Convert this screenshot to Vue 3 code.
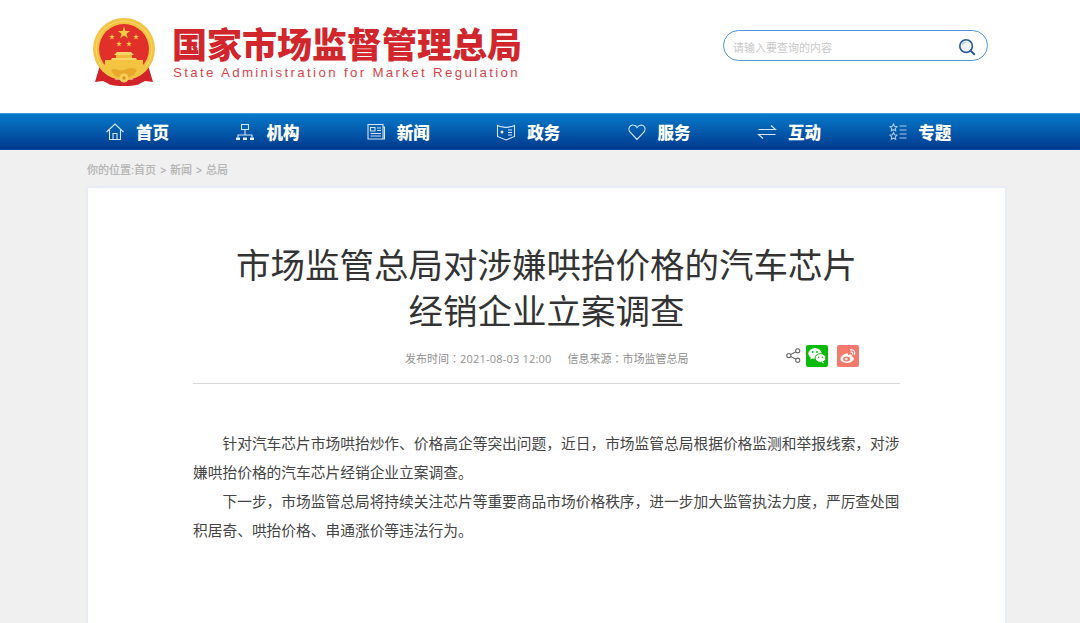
<template>
  <div class="page">
    <header class="top">
      <div class="brand">
        <svg class="emblem" viewBox="0 0 64 70" width="64" height="70">
          <!-- 红色绶带 -->
          <path d="M8 47 L3 64 L11 63 L19 67 L24 60 Z" fill="#d2232a" />
          <path d="M56 47 L61 64 L53 63 L45 67 L40 60 Z" fill="#d2232a" />
          <circle cx="32" cy="31" r="31" fill="#f3c342" />
          <circle cx="32" cy="31" r="28" fill="none" stroke="#f8d873" stroke-width="1" />
          <circle cx="32" cy="31" r="25" fill="#e1302a" />
          <polygon v-for="(s, i) in stars" :key="i" :points="s" fill="#f6c945" />
          <!-- 天安门 -->
          <path d="M25 34h14l3 3H22z" fill="#f8d469" />
          <path d="M24 37h16v3H24z" fill="#f3b93a" />
          <path d="M20 40h24l1 2H19z" fill="#f8d469" />
          <path d="M13 42h38v6H13z" fill="#f5c440" />
          <path d="M7 48h50c-3 6-8 9-13 11H20c-5-2-10-5-13-11z" fill="#f3c342" />
          <path d="M19 52c4-3 9 2 13 0s9-3 13 0c-2 5-7 8-13 8s-11-3-13-8z" fill="#e8a92a" />
          <path d="M15 60c5 1 12 2 17 2s12-1 17-2l-2 6c-5 2-10 2-15 2s-10 0-15-2z" fill="#d2232a" />
          <circle cx="32" cy="60" r="4.5" fill="#f6cf5c" />
          <circle cx="32" cy="60" r="1.8" fill="#d9961f" />
        </svg>
        <div class="brand-text">
          <div class="brand-cn">国家市场监督管理总局</div>
          <div class="brand-en">State Administration for Market Regulation</div>
        </div>
      </div>
      <div class="search">
        <span class="placeholder">请输入要查询的内容</span>
        <svg class="search-icon" viewBox="0 0 20 20" width="18" height="18">
          <circle cx="9" cy="9" r="7" fill="#eef3fa" stroke="#2a5a9c" stroke-width="1.8" />
          <path d="M5 8a4 4 0 0 1 4-3.5" fill="none" stroke="#b9cbe3" stroke-width="1.4" />
          <path d="M14 14l4 4" stroke="#2a5a9c" stroke-width="2.2" stroke-linecap="round" />
        </svg>
      </div>
    </header>

    <nav class="nav">
      <a v-for="item in navItems" :key="item.label" class="nav-item">
        <svg viewBox="0 0 20 20" width="20" height="20" class="nav-icon" v-html="item.icon"></svg>
        <span class="nav-label">{{ item.label }}</span>
      </a>
    </nav>

    <main class="main">
      <div class="crumb">你的位置:首页 <i>&gt;</i> 新闻 <i>&gt;</i> 总局</div>
      <article class="card">
        <h1>市场监管总局对涉嫌哄抬价格的汽车芯片<br />经销企业立案调查</h1>
        <div class="meta">
          <span>发布时间<span class="colon">：</span><span class="num">2021-08-03 12:00</span></span>
          <span class="source">信息来源<span class="colon">：</span>市场监管总局</span>
          <div class="share">
            <svg viewBox="0 0 16 16" width="15" height="15" class="share-icon">
              <circle cx="3" cy="8" r="2.2" fill="none" stroke="#666" stroke-width="1.1" />
              <circle cx="12.5" cy="3" r="2.2" fill="none" stroke="#666" stroke-width="1.1" />
              <circle cx="12.5" cy="13" r="2.2" fill="none" stroke="#666" stroke-width="1.1" />
              <path d="M5 7l5.6-3M5 9l5.6 3" stroke="#666" stroke-width="1.1" />
            </svg>
            <span class="btn wechat">
              <svg viewBox="0 0 22 22" width="22" height="22">
                <ellipse cx="9" cy="8.5" rx="6.6" ry="5.4" fill="#fff" />
                <path d="M5 12l-.8 2.6 3-1.5z" fill="#fff" />
                <ellipse cx="14.5" cy="13" rx="5.4" ry="4.4" fill="#fff" stroke="#09bb07" stroke-width="1" />
                <path d="M17 16.5l1 2-2.6-1.2z" fill="#fff" />
                <circle cx="6.8" cy="7" r=".9" fill="#09bb07" />
                <circle cx="11" cy="7" r=".9" fill="#09bb07" />
                <circle cx="12.6" cy="12.2" r=".7" fill="#09bb07" />
                <circle cx="16.4" cy="12.2" r=".7" fill="#09bb07" />
              </svg>
            </span>
            <span class="btn weibo">
              <svg viewBox="0 0 22 22" width="22" height="22">
                <path d="M9.5 8.5c-3 .6-6 3-6 5.6 0 2.3 3 3.9 6.4 3.9 4 0 7-2.2 7-4.2 0-1.5-1.4-2-2.1-2.2.5-1.2.2-2-1.5-2-1 0-2.3.5-2.3.5.3-1.4-.2-2-1.5-1.6z" fill="#fff" />
                <ellipse cx="9.6" cy="14" rx="3.6" ry="2.5" fill="#f2796c" />
                <circle cx="9.2" cy="14" r="1.3" fill="#fff" />
                <path d="M13.5 4.8c3-.5 5 2 4 4.6M14 7.2c1.4-.2 2 .9 1.6 1.8" fill="none" stroke="#fff" stroke-width="1.2" stroke-linecap="round" />
              </svg>
            </span>
          </div>
        </div>
        <div class="content">
          <p>针对汽车芯片市场哄抬炒作、价格高企等突出问题，近日，市场监管总局根据价格监测和举报线索，对涉嫌哄抬价格的汽车芯片经销企业立案调查。</p>
          <p>下一步，市场监管总局将持续关注芯片等重要商品市场价格秩序，进一步加大监管执法力度，严厉查处囤积居奇、哄抬价格、串通涨价等违法行为。</p>
        </div>
      </article>
    </main>
  </div>
</template>

<script setup>
// 五角星顶点
function star(cx, cy, r) {
  const pts = []
  for (let i = 0; i < 10; i++) {
    const rad = i % 2 === 0 ? r : r * 0.4
    const a = -Math.PI / 2 + (i * Math.PI) / 5
    pts.push((cx + rad * Math.cos(a)).toFixed(2) + ',' + (cy + rad * Math.sin(a)).toFixed(2))
  }
  return pts.join(' ')
}

const stars = [star(32, 15, 6.5), star(20, 19, 3), star(44, 19, 3), star(27, 26, 3), star(37, 26, 3)]

const line = 'fill="none" stroke="#d5e6f7" stroke-width="1.1"'
const pale = 'fill="none" stroke="#a9c8ea" stroke-width="1.1"'
const navItems = [
  {
    label: '首页',
    icon: `<path d="M1.5 10L10 2l8.5 8M4.5 8v9.500h11V8M8 17.500v-6h4v6" ${line}/>`
  },
  {
    label: '机构',
    icon: `<path d="M6.5 2.500h7v5h-7zM10 7.500v6M3 15.500v-2.500h14v2.500" ${line}/><path d="M1 15.500h4v2.500H1zM8 15.500h4v2.500H8zM15 15.500h4v2.500h-4z" fill="#e6f0fa"/>`
  },
  {
    label: '新闻',
    icon: `<path d="M2 2.500h15v14.500H2zM17 5h1.500v12H17M4.500 5.500h4.500v3.500H4.500zM11 6h4M11 8.500h4M4.500 11.500h10.500M4.500 14h10.500" ${line}/>`
  },
  {
    label: '政务',
    icon: `<path d="M1.5 3.500c3 1.500 6 1.500 8.500 2 2.500-.5 5.500-.5 8.500-2v11l-8.500 3.500-8.500-3.500z" ${line}/><path d="M12 8h4M12 10.500h4M12 13h4" ${line}/><circle cx="6" cy="10" r="1.5" fill="#e6f0fa"/>`
  },
  {
    label: '服务',
    icon: `<path d="M10 17.500L2.500 9.500C.5 6.500 3 2.500 6.500 3c1.800.2 3 1.500 3.500 2.500C11 4 12.500 3 14.500 3c3 .3 4.500 3.500 3 6.500z" ${line}/>`
  },
  {
    label: '互动',
    icon: `<path d="M1.5 7.500h17L14 3.500M18.500 12.500h-17L6 16.500" ${line}/>`
  },
  {
    label: '专题',
    icon: `<path d="M6.5 2l1.100 2.300 2.400.4-1.700 1.700.4 2.400-2.200-1.100-2.200 1.100.4-2.400L3 4.700l2.400-.4zM6.500 10.500l1.100 2.300 2.400.4-1.700 1.700.4 2.400-2.200-1.100-2.200 1.100.4-2.400L3 13.200l2.400-.4z" ${pale}/><path d="M12.500 4h7M12.500 8h7M12.500 12h7M12.500 16h7" ${pale}/>`
  }
]
</script>

<style scoped>
.page {
  height: 623px;
  overflow: hidden;
  background: #f0f0f0;
  font-family: "Liberation Sans", "Noto Sans CJK SC", sans-serif;
}

.top {
  height: 113px;
  background: #fff;
  display: flex;
  justify-content: space-between;
  align-items: flex-start;
  padding: 0 92px;
  box-sizing: border-box;
}

.brand {
  display: flex;
  padding-top: 18px;
}

.emblem {
  flex-shrink: 0;
}

.brand-text {
  margin-left: 16px;
}

.brand-cn {
  font-family: "Noto Sans CJK SC", sans-serif;
  font-size: 35px;
  font-weight: 900;
  line-height: 40px;
  margin-top: 5px;
  color: #d0262c;
  white-space: nowrap;
}

.brand-en {
  font-size: 13.3px;
  letter-spacing: 2.33px;
  line-height: 16px;
  margin-top: 2px;
  margin-left: 1px;
  color: #d9434a;
  white-space: nowrap;
}

.search {
  margin-top: 30px;
  width: 265px;
  height: 31px;
  box-sizing: border-box;
  border: 1.5px solid #4f97d8;
  border-radius: 16px;
  padding: 0 11px 0 9px;
  display: flex;
  align-items: center;
  justify-content: space-between;
}

.placeholder {
  font-size: 11px;
  color: #c8c8c8;
  margin-top: 2px;
}

.search-icon {
  margin-top: 3px;
}

.nav {
  height: 37px;
  box-sizing: border-box;
  border-top: 1px solid #3f97dc;
  border-bottom: 1px solid #0a4aa0;
  background: linear-gradient(#0779c9, #003a8e);
  display: flex;
  padding-left: 105px;
}

.nav-item {
  width: 130.4px;
  display: flex;
  align-items: center;
  color: #fff;
  font-family: "Noto Sans CJK SC", sans-serif;
  font-size: 16.5px;
  font-weight: 900;
}

.nav-icon {
  margin-right: 11px;
  flex-shrink: 0;
}

.nav-label {
  margin-top: 1px;
}

.main {
  padding: 0 73px 0 86px;
}

.crumb {
  height: 36px;
  line-height: 40px;
  padding-left: 1px;
  font-size: 11px;
  color: #b0b0b0;
  -webkit-text-stroke: 0.2px #b0b0b0;
}

.crumb i {
  font-style: normal;
  font-size: 10px;
  margin: 0 1px;
}

.card {
  background: #fff;
  border: 2px solid #e8ecf4;
  padding: 52px 105px 0;
  height: 600px;
  box-sizing: border-box;
}

h1 {
  margin: 0;
  text-align: center;
  font-family: "Noto Sans CJK SC", sans-serif;
  font-size: 34.5px;
  font-weight: 400;
  line-height: 46px;
  color: #333;
}

.meta {
  display: flex;
  align-items: center;
  height: 51px;
  padding-left: 212px;
  border-bottom: 1px solid #d9d9d9;
  font-size: 11px;
  color: #8f8f8f;
  margin-bottom: 46px;
}

.colon {
  font-family: "Noto Sans CJK TC", sans-serif;
}

.num {
  font-family: "Open Sans", sans-serif;
  letter-spacing: 0.2px;
}

.source {
  margin-left: 16px;
}

.share {
  margin-left: auto;
  margin-right: 41px;
  display: flex;
  align-items: center;
  margin-top: -4px;
}

.share-icon {
  margin-right: 5px;
}

.btn {
  width: 22px;
  height: 22px;
  border-radius: 2px;
  display: block;
}

.wechat {
  background: #09bb07;
}

.weibo {
  background: #f2796c;
  margin-left: 9px;
}

.content {
  font-size: 14.73px;
  line-height: 29px;
  color: #444;
}

.content p {
  margin: 0;
  text-indent: 2em;
}
</style>

<style>
html,
body {
  margin: 0;
  overflow: hidden;
}
</style>
